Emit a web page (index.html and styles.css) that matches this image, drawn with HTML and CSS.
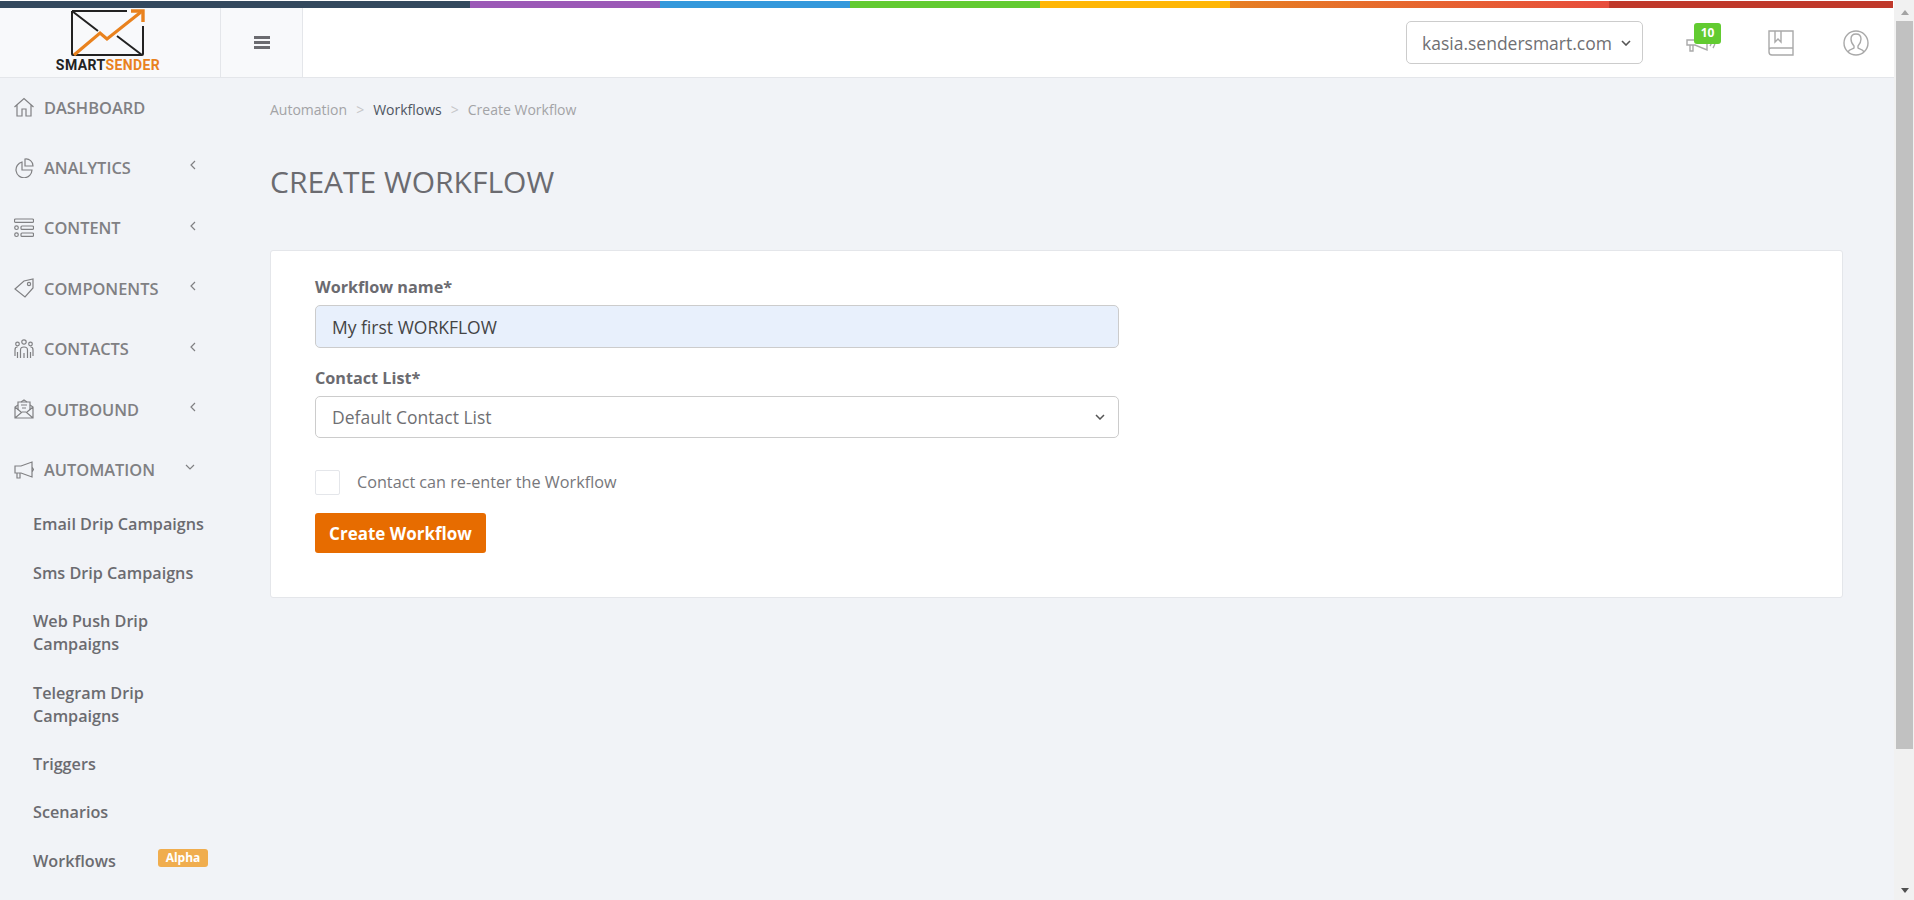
FILE: index.html
```html
<!DOCTYPE html>
<html lang="en">
<head>
  <meta charset="UTF-8">
  <title>Create Workflow</title>
  <link rel="stylesheet" href="styles.css">
</head>
<body>
  <div class="window">
    <div class="page">
      <div class="color-strip">
        <span class="strip-navy"></span>
        <span class="strip-purple"></span>
        <span class="strip-blue"></span>
        <span class="strip-green"></span>
        <span class="strip-yellow"></span>
        <span class="strip-orange"></span>
        <span class="strip-red"></span>
      </div>

      <header class="topbar">
        <div class="logo">
          <svg class="logo-mark" width="74" height="48" viewBox="0 0 74 48" fill="none">
            <path d="M1 2h55M72 17v28a1 1 0 0 1-1 1H2a1 1 0 0 1-1-1V2" stroke="#222" stroke-width="2"/>
            <path d="M1 2l26 20M46 27l25 19" stroke="#222" stroke-width="2"/>
            <path d="M3 46l26-22 7 6 34-27" stroke="#e9821e" stroke-width="3.2"/>
            <path d="M60 2h12v11" stroke="#e9821e" stroke-width="3.4"/>
          </svg>
          <div class="logo-text">SMART<span>SENDER</span></div>
        </div>
        <button class="menu-toggle">
          <svg width="16" height="13" viewBox="0 0 16 13"><path d="M0 0h16v3H0zM0 5h16v3H0zM0 10h16v3H0z" fill="#6b6b70"/></svg>
        </button>
        <div class="topbar-right">
          <div class="domain-select">
            <span>kasia.sendersmart.com</span>
            <svg width="10" height="6" viewBox="0 0 10 6" fill="none"><path d="M1 1l4 4 4-4" stroke="#555" stroke-width="1.6"/></svg>
          </div>
          <div class="top-icon notify">
            <svg width="34" height="24" viewBox="0 0 34 24" fill="none" stroke="#a9a9a9" stroke-width="1.4">
              <path d="M3 9h8l12-5v15l-12-5H3zM6 14v6h3v-6M26 8q3 3 0 7M29 6q4 5 0 11"/>
            </svg>
            <span class="badge-count">10</span>
          </div>
          <div class="top-icon book">
            <svg width="26" height="26" viewBox="0 0 26 26" fill="none" stroke="#a9a9a9" stroke-width="1.4">
              <path d="M1 20V1h24v24H4a3 3 0 0 1-3-3v-2a2 2 0 0 1 2-2h22"/><path d="M7 1v11l3-3 3 3V1"/>
            </svg>
          </div>
          <div class="top-icon user">
            <svg width="26" height="26" viewBox="0 0 26 26" fill="none" stroke="#a9a9a9" stroke-width="1.4">
              <circle cx="13" cy="13" r="12"/>
              <path d="M5 22c1-3 5-3 6-4v-2c-2-2-3-4-3-7 0-3 2-5 5-5s5 2 5 5c0 3-1 5-3 7v2c1 1 5 1 6 4"/>
            </svg>
          </div>
        </div>
      </header>

      <div class="layout">
        <nav class="sidebar">
          <a class="nav-item">
            <svg viewBox="0 0 20 20"><path d="M0.500 10l9.500-8.500 9.500 8.500M3 8v11h5v-7h4v7h5V8"/></svg>
            <span>Dashboard</span>
          </a>
          <a class="nav-item has-sub">
            <svg viewBox="0 0 20 20"><path d="M8 4a8 8 0 1 0 10 8H8z"/><path d="M11 1a7 7 0 0 1 8 7h-8z"/></svg>
            <span>Analytics</span>
            <svg class="chev" viewBox="0 0 6 10"><path d="M5 1L1 5l4 4"/></svg>
          </a>
          <a class="nav-item has-sub">
            <svg viewBox="0 0 20 20"><rect x="0.5" y="1" width="19" height="3.4" rx="1"/><rect x="7" y="8" width="12.5" height="3.4" rx="1"/><rect x="7" y="15" width="12.5" height="3.4" rx="1"/><circle cx="2.5" cy="9.7" r="1.8"/><circle cx="2.5" cy="16.7" r="1.8"/></svg>
            <span>Content</span>
            <svg class="chev" viewBox="0 0 6 10"><path d="M5 1L1 5l4 4"/></svg>
          </a>
          <a class="nav-item has-sub">
            <svg viewBox="0 0 20 20"><path d="M1 11l9-8 9-2v9l-8 9z"/><circle cx="15" cy="6" r="1.6"/></svg>
            <span>Components</span>
            <svg class="chev" viewBox="0 0 6 10"><path d="M5 1L1 5l4 4"/></svg>
          </a>
          <a class="nav-item has-sub">
            <svg viewBox="0 0 20 20"><circle cx="10" cy="3" r="2.2"/><circle cx="3.500" cy="5" r="1.800"/><circle cx="16.500" cy="5" r="1.800"/><path d="M6.500 19v-8q0-3 3.500-3t3.500 3v8M10 19v-5M1 17v-6q0-3 2.500-3M19 17v-6q0-3-2.500-3M3.500 13v6M16.500 13v6"/></svg>
            <span>Contacts</span>
            <svg class="chev" viewBox="0 0 6 10"><path d="M5 1L1 5l4 4"/></svg>
          </a>
          <a class="nav-item has-sub">
            <svg viewBox="0 0 20 20"><path d="M4 6L1 8v11h18V8l-3-2M7 3l3-2 3 2M1 19l7-6h4l7 6M1 8l6 5M19 8l-6 5"/><path d="M4 11V3h12v8M7 6h6M8 9h4"/></svg>
            <span>Outbound</span>
            <svg class="chev" viewBox="0 0 6 10"><path d="M5 1L1 5l4 4"/></svg>
          </a>
          <a class="nav-item has-sub open">
            <svg viewBox="0 0 20 20"><path d="M1 6h6l11-4v15L7 13H1zM3 13v5h3v-5M18 7l1.500 2.500L18 12"/></svg>
            <span>Automation</span>
            <svg class="chev-down" viewBox="0 0 10 6"><path d="M1 1l4 4 4-4"/></svg>
          </a>
          <div class="subnav">
            <a>Email Drip Campaigns</a>
            <a>Sms Drip Campaigns</a>
            <a>Web Push Drip Campaigns</a>
            <a>Telegram Drip Campaigns</a>
            <a>Triggers</a>
            <a>Scenarios</a>
            <a class="with-badge">Workflows <span class="badge-alpha">Alpha</span></a>
          </div>
        </nav>

        <main class="content">
          <ol class="breadcrumb">
            <li>Automation</li>
            <li class="sep">&gt;</li>
            <li class="current">Workflows</li>
            <li class="sep">&gt;</li>
            <li>Create Workflow</li>
          </ol>
          <h1 class="page-title">CREATE WORKFLOW</h1>

          <section class="card">
            <form class="workflow-form">
              <label class="field-label">Workflow name*</label>
              <div class="field-input filled">My first WORKFLOW</div>

              <label class="field-label second">Contact List*</label>
              <div class="field-input select">
                <span>Default Contact List</span>
                <svg width="10" height="6" viewBox="0 0 10 6" fill="none"><path d="M1 1l4 4 4-4" stroke="#555" stroke-width="1.5"/></svg>
              </div>

              <div class="check-row">
                <span class="checkbox"></span>
                <span class="check-text">Contact can re-enter the Workflow</span>
              </div>

              <button type="button" class="btn-create">Create Workflow</button>
            </form>
          </section>
        </main>
      </div>
    </div>

    <div class="scrollbar">
      <div class="scroll-arrow"></div>
      <div class="scroll-thumb"></div>
      <div class="scroll-arrow down"></div>
    </div>
  </div>
</body>
</html>
```

FILE: styles.css
```css
* {
  margin: 0;
  padding: 0;
  box-sizing: border-box;
}

body {
  font-family: 'Open Sans', sans-serif;
  background: #f1f3f7;
  color: #6b6b70;
  overflow: hidden;
}

a {
  display: block;
}

.window {
  display: flex;
  height: 100vh;
  overflow: hidden;
}

.page {
  flex: 1;
  min-width: 0;
}

/* Color strip on top */
.color-strip {
  display: flex;
  height: 8px;
  border-top: 1px solid #fff;
  background: #fff;
}

.strip-navy { width: 470px; background: #34495e; }
.strip-purple { width: 190px; background: #9b59b6; }
.strip-blue { width: 190px; background: #3498db; }
.strip-green { width: 190px; background: #62cb31; }
.strip-yellow { width: 190px; background: #ffb606; }
.strip-orange { width: 379px; background: linear-gradient(90deg, #e67e22, #e74c3c); }
.strip-red { width: 284px; background: #c0392b; }

/* Top bar */
.topbar {
  display: flex;
  height: 70px;
  background: #fff;
  border-bottom: 1px solid #e4e6ea;
}

.logo {
  width: 221px;
  background: #f8f9fb;
  border-right: 1px solid #e4e6ea;
  display: flex;
  flex-direction: column;
  align-items: center;
  padding-top: 1px;
  padding-right: 4px;
}

.logo-mark {
  display: block;
}

.logo-text {
  font-family: 'Roboto', sans-serif;
  font-size: 14px;
  font-weight: 700;
  letter-spacing: 0.4px;
  color: #222;
  line-height: 15px;
  margin-top: 1px;
}

.logo-text span {
  color: #e9821e;
}

.menu-toggle {
  width: 82px;
  border: 0;
  border-right: 1px solid #e4e6ea;
  background: #f8f9fb;
  display: flex;
  align-items: center;
  justify-content: center;
}

.topbar-right {
  flex: 1;
  display: flex;
  align-items: center;
  justify-content: flex-end;
  padding-right: 25px;
}

.domain-select {
  width: 237px;
  height: 43px;
  border: 1px solid #ccc;
  border-radius: 5px;
  display: flex;
  align-items: center;
  justify-content: space-between;
  padding: 0 11px 0 15px;
  font-size: 17.500px;
  color: #6f6f73;
  margin-right: 41px;
}

.top-icon {
  display: flex;
}

.top-icon.book {
  margin-left: 50px;
}

.top-icon.user {
  margin-left: 49px;
}

.notify {
  position: relative;
}

.badge-count {
  position: absolute;
  top: -8px;
  left: 10px;
  width: 27px;
  height: 21px;
  background: #62cb31;
  color: #fff;
  border-radius: 3px;
  font-size: 12px;
  font-weight: 700;
  line-height: 20px;
  text-align: center;
}

/* Sidebar */
.layout {
  display: flex;
}

.sidebar {
  width: 221px;
  flex-shrink: 0;
  margin-top: -1px;
}

.nav-item {
  height: 60.400px;
  display: flex;
  align-items: center;
  padding-left: 14px;
  font-size: 16.400px;
  font-weight: 600;
  color: #808083;
  text-transform: uppercase;
  position: relative;
}

.nav-item svg {
  width: 20px;
  height: 20px;
  fill: none;
  stroke: #808083;
  stroke-width: 1.2;
  margin-right: 10px;
  flex-shrink: 0;
}

.nav-item .chev {
  width: 6px;
  height: 10px;
  position: absolute;
  left: 190px;
  top: 23px;
  margin: 0;
}

.nav-item .chev-down {
  width: 10px;
  height: 6px;
  position: absolute;
  left: 185px;
  top: 25px;
  margin: 0;
}

.subnav {
  margin-top: 1px;
  padding-left: 33px;
  padding-right: 6px;
}

.subnav a {
  font-size: 16.200px;
  font-weight: 600;
  line-height: 23px;
  padding: 12.700px 0;
  color: #6b6b70;
  position: relative;
}

.badge-alpha {
  position: absolute;
  left: 125px;
  top: 12px;
  width: 50px;
  height: 18px;
  background: #f0ad4e;
  border-radius: 3px;
  color: #fff;
  font-size: 12px;
  font-weight: 700;
  line-height: 17px;
  text-align: center;
}

/* Content */
.content {
  flex: 1;
  min-width: 0;
  padding: 22px 51px 0 49px;
}

.breadcrumb {
  list-style: none;
  display: flex;
  font-size: 14px;
  line-height: 19px;
  color: #a3a3a6;
}

.breadcrumb .sep {
  margin: 0 9px;
  color: #c6c6c8;
}

.breadcrumb .current {
  color: #4f5662;
}

.page-title {
  font-size: 30px;
  font-weight: 400;
  line-height: 41px;
  color: #6b6b70;
  margin-top: 42px;
}

.card {
  margin-top: 48px;
  height: 348px;
  background: #fff;
  border: 1px solid #e4e6ea;
  border-radius: 3px;
  padding: 25px 44px;
}

.workflow-form {
  width: 804px;
}

.field-label {
  display: block;
  font-size: 16.200px;
  font-weight: 700;
  line-height: 22px;
  color: #6b6b70;
  margin-bottom: 7px;
}

.field-label.second {
  margin-top: 19px;
}

.field-input {
  height: 43px;
  border: 1px solid #ccc;
  border-radius: 5px;
  display: flex;
  align-items: center;
  justify-content: space-between;
  padding: 0 13px 0 16px;
  font-size: 17.500px;
  color: #6f6f73;
}

.field-input.select {
  height: 42px;
}

.field-input.filled {
  background: #e8f0fc;
  color: #444;
}

.check-row {
  display: flex;
  align-items: center;
  margin-top: 32px;
  font-size: 16.200px;
  color: #77777b;
}

.check-text {
  padding-bottom: 2px;
}

.checkbox {
  width: 25px;
  height: 25px;
  border: 1px solid #e4e6ea;
  border-radius: 2px;
  margin-right: 17px;
}

.btn-create {
  display: block;
  width: 171px;
  height: 40px;
  margin-top: 18px;
  background: #e76c00;
  border: 0;
  border-radius: 3px;
  color: #fff;
  font-family: inherit;
  font-size: 17px;
  font-weight: 700;
}

/* Drawn scrollbar */
.scrollbar {
  width: 20px;
  background: #f1f1f1;
  padding: 0 1px 0 2px;
  display: flex;
  flex-direction: column;
}

.scroll-arrow {
  width: 0;
  height: 0;
  margin: 10px auto 6px;
  border-left: 4.500px solid transparent;
  border-right: 4.500px solid transparent;
  border-bottom: 5px solid #a3a3a3;
}

.scroll-arrow.down {
  margin: auto auto 7px;
  border-bottom: 0;
  border-top: 5px solid #505050;
}

.scroll-thumb {
  height: 728px;
  background: #c1c1c1;
}
```
